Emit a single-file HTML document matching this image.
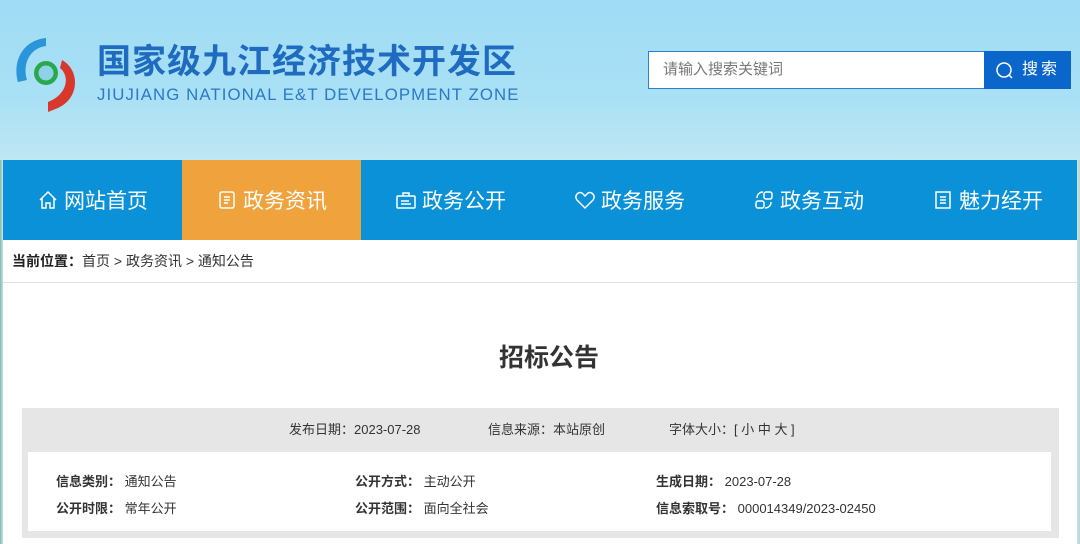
<!DOCTYPE html>
<html><head><meta charset="utf-8"><style>
*{margin:0;padding:0;box-sizing:border-box}
body{width:1080px;height:544px;overflow:hidden;position:relative;font-family:"Liberation Sans","Noto Sans CJK SC",sans-serif;background:linear-gradient(90deg,#7fb9a8 0,#c9e6ee 3px,#c9e6ee 1077px,#b8d6cc 1080px)}
.hdr{position:absolute;left:0;top:0;width:1080px;height:160px;background:linear-gradient(180deg,#9fdcf5 0,#a9e0f5 60%,#bfe6f3 100%)}
.abs{position:absolute}
.nav{position:absolute;left:3px;top:160px;width:1074px;height:80px;background:#0a91d8}
.ni{position:absolute;top:0;height:80px;width:179px;color:#fff;font-size:21px;display:flex;align-items:center;justify-content:center;gap:5px}
.ni svg{width:22px;height:22px;fill:none;stroke:#fff;stroke-width:1.5}
.main{position:absolute;left:3px;top:240px;width:1074px;height:304px;background:#fff}
.crumb{position:absolute;left:0;top:0;width:1074px;height:43px;border-bottom:1px solid #e0e0e0;font-size:14px;color:#333;line-height:43px;padding-left:9px}
.lbl{font-weight:bold;font-size:14px;color:#222}
.t13{font-size:13px;color:#333;position:absolute}
.b{font-weight:bold}
</style></head><body>
<div class="hdr"></div>
<svg class="abs" style="left:12px;top:36px" width="72" height="76" viewBox="0 0 72 76">
<path d="M34 2 C12 4 0 24 6 46 L15 44 C10 28 18 12 34 10Z" fill="#2a95d8"/>
<path d="M50 24 C68 34 68 62 46 72 L36 76 L36 66 C56 58 58 40 48 32Z" fill="#d8382c"/>
<circle cx="34" cy="37" r="12" fill="#2aa84c"/><circle cx="34" cy="37" r="7.5" fill="#8fd2e8"/>
</svg>
<div class="abs" style="left:97px;top:40px;font-size:34px;font-weight:bold;color:#1e6bc0;letter-spacing:1px;line-height:44px;white-space:nowrap">国家级九江经济技术开发区</div>
<div class="abs" style="left:97px;top:85px;font-size:16.8px;color:#2a78c8;letter-spacing:1.1px;line-height:20px;white-space:nowrap">JIUJIANG NATIONAL E&amp;T DEVELOPMENT ZONE</div>
<div class="abs" style="left:648px;top:51px;width:337px;height:38px;background:#fff;border:1px solid #2a7fd0;font-size:15px;color:#777;line-height:36px;padding-left:14px">请输入搜索关键词</div>
<div class="abs" style="left:984px;top:51px;width:87px;height:38px;background:#0b66cc;color:#fff;font-size:16px;line-height:38px;padding-left:38px;letter-spacing:3px">搜索</div>
<svg class="abs" style="left:995px;top:61px" width="20" height="20" viewBox="0 0 20 20" fill="none" stroke="#fff" stroke-width="1.5"><circle cx="9" cy="9" r="7"/><path d="M14 14l3 3"/></svg>
<div class="nav">
<div class="ni" style="left:0"><svg viewBox="0 0 22 22"><path d="M3 11L11 3l8 8M5 9v10h4v-5h4v5h4V9"/></svg>网站首页</div>
<div class="ni" style="left:179px;background:#f0a23c"><svg viewBox="0 0 22 22"><rect x="4" y="3" width="14" height="16" rx="2"/><path d="M8 8h6M8 11h6M8 14h4"/></svg>政务资讯</div>
<div class="ni" style="left:358px"><svg viewBox="0 0 22 22"><rect x="2" y="7" width="18" height="12" rx="1"/><path d="M8 7V4h6v3M6 12h8M6 15h10"/></svg>政务公开</div>
<div class="ni" style="left:537px"><svg viewBox="0 0 22 22"><path d="M11 19L3 11C0 7 4 2 8 4l3 3 3-3c4-2 8 3 5 7z"/></svg>政务服务</div>
<div class="ni" style="left:716px"><svg viewBox="0 0 22 22"><rect x="11" y="3" width="8" height="7" rx="2"/><rect x="3" y="12" width="8" height="7" rx="2"/><path d="M4 9c0-4 3-6 6-6M18 13c0 4-3 6-6 6"/></svg>政务互动</div>
<div class="ni" style="left:895px"><svg viewBox="0 0 22 22"><rect x="4" y="3" width="14" height="16"/><path d="M8 8h6M8 11h6M8 14h6"/></svg>魅力经开</div>
</div>
<div class="main">
<div class="crumb"><span class="lbl">当前位置：</span>首页 &gt; 政务资讯 &gt; 通知公告</div>
<div class="abs" style="left:0;top:98px;width:1092px;text-align:center;font-size:25px;font-weight:bold;color:#333">招标公告</div>
<div class="abs" style="left:19px;top:168px;width:1037px;height:130px;background:#e6e6e6"></div>
<div class="abs" style="left:25px;top:212px;width:1023px;height:79px;background:#fff"></div>
<div class="t13" style="left:286px;top:179px">发布日期：2023-07-28</div>
<div class="t13" style="left:485px;top:179px">信息来源：本站原创</div>
<div class="t13" style="left:666px;top:179px">字体大小：[ 小 中 大 ]</div>
<div class="t13" style="left:53px;top:231px"><span class="b">信息类别：</span> 通知公告</div>
<div class="t13" style="left:53px;top:258px"><span class="b">公开时限：</span> 常年公开</div>
<div class="t13" style="left:352px;top:231px"><span class="b">公开方式：</span> 主动公开</div>
<div class="t13" style="left:352px;top:258px"><span class="b">公开范围：</span> 面向全社会</div>
<div class="t13" style="left:653px;top:231px"><span class="b">生成日期：</span> 2023-07-28</div>
<div class="t13" style="left:653px;top:258px"><span class="b">信息索取号：</span> 000014349/2023-02450</div>
</div>
</body></html>
